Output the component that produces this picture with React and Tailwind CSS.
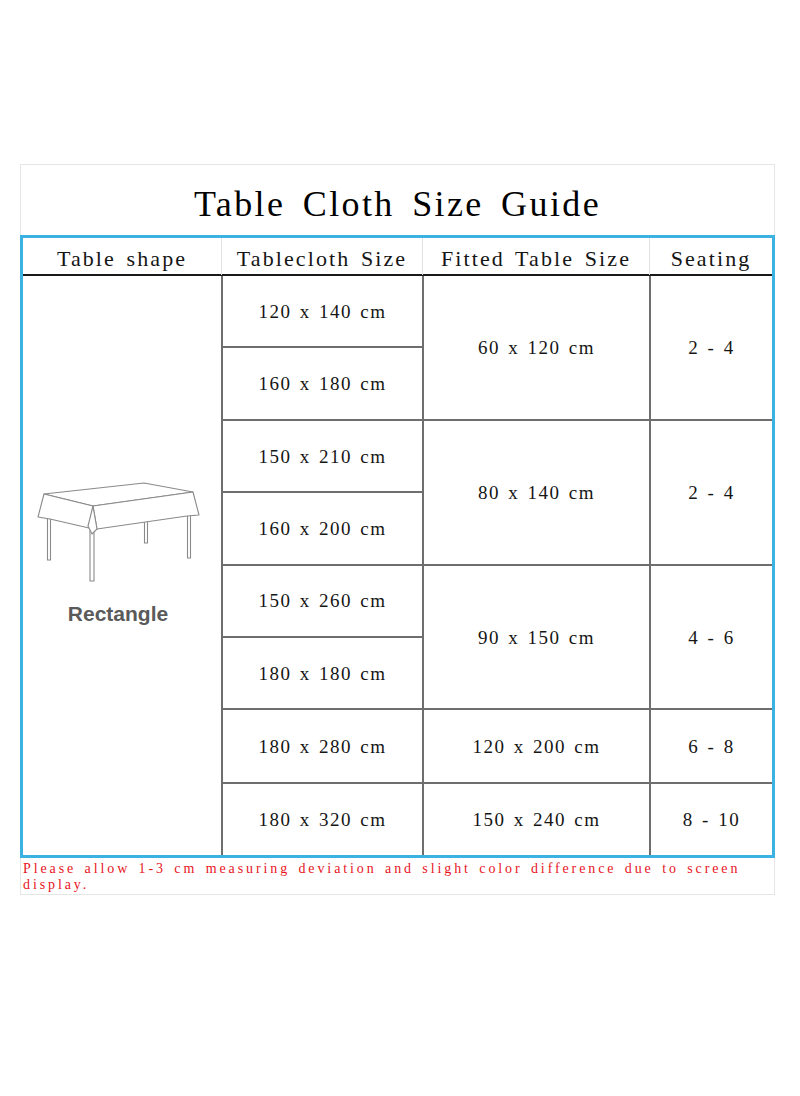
import React from "react";

const serif = { fontFamily: '"Liberation Serif", "Times New Roman", serif' };

const groups = [
  { sizes: ["120 x 140 cm", "160 x 180 cm"], fitted: "60 x 120 cm", seats: "2 - 4" },
  { sizes: ["150 x 210 cm", "160 x 200 cm"], fitted: "80 x 140 cm", seats: "2 - 4" },
  { sizes: ["150 x 260 cm", "180 x 180 cm"], fitted: "90 x 150 cm", seats: "4 - 6" },
  { sizes: ["180 x 280 cm"], fitted: "120 x 200 cm", seats: "6 - 8" },
  { sizes: ["180 x 320 cm"], fitted: "150 x 240 cm", seats: "8 - 10" },
];

function TableDrawing() {
  return (
    <svg width="175" height="112" viewBox="30 475 175 112" fill="none" stroke="#8a8a8a" strokeWidth="1.1" strokeLinejoin="round">
      {/* legs */}
      <path d="M46.5 517 L46.5 559 L49.5 559 L49.5 517" fill="#fff" />
      <path d="M143.5 519 L143.5 542 L146.5 542 L146.5 519" fill="#fff" />
      <path d="M186.5 514 L186.5 557 L189.5 557 L189.5 514" fill="#fff" />
      <path d="M89 529 L89 580 L93 580 L93 529" fill="#fff" />
      {/* cloth top */}
      <path d="M43 493 L143 482 L192 491 L92 505 Z" fill="#fff" />
      {/* left drop */}
      <path d="M43 493 L37 516 L49 518 L88 527 L92 505 Z" fill="#fff" />
      {/* right drop */}
      <path d="M92 505 L192 491 L198 514 L186 515 L96 528 Z" fill="#fff" />
      {/* front corner fold */}
      <path d="M92 505 L87 525 L91 533 L96 528 Z" fill="#fff" />
    </svg>
  );
}

export default function App() {
  return (
    <div className="w-[800px] h-[1096px] bg-white pt-[164px]">
      <div className="ml-[20px] w-[755px]">
        {/* title */}
        <div className="h-[71px] border-t border-x border-[#e6e6e6] flex items-center justify-center pt-[8px]">
          <h1 className="text-[36px] tracking-[2.4px] [word-spacing:6px] text-black leading-none" style={serif}>
            Table Cloth Size Guide
          </h1>
        </div>

        {/* table */}
        <div className="border-[3px] border-[#3cb2e2]">
          <div className="grid grid-cols-[198px_201px_227px_123px] h-[38px] border-b-2 border-[#1a1a1a] text-[22px] tracking-[2.1px] [word-spacing:3px] text-[#151515]" style={serif}>
            <div className="flex items-center justify-center pt-[4px]">Table shape</div>
            <div className="flex items-center justify-center pt-[4px] border-l border-[#e2e2e2]">Tablecloth Size</div>
            <div className="flex items-center justify-center pt-[4px] border-l border-[#e2e2e2]">Fitted Table Size</div>
            <div className="flex items-center justify-center pt-[4px] border-l border-[#e2e2e2]">Seating</div>
          </div>

          <div className="flex h-[579px] text-[19px] tracking-[1.5px] [word-spacing:2px] text-[#151515]" style={serif}>
            <div className="w-[198px] flex flex-col items-center justify-center gap-[14px] pb-[29px] pr-[8px]">
              <TableDrawing />
              <span className="text-[21px] font-bold text-[#5a5a5a] tracking-normal [word-spacing:0] leading-6" style={{ fontFamily: '"Liberation Sans", Arial, sans-serif' }}>
                Rectangle
              </span>
            </div>
            <div className="flex-1 flex flex-col border-l-2 border-[#6e6e6e]">
              {groups.map((g, gi) => (
                <div
                  key={gi}
                  className={`flex ${gi > 0 ? "border-t-2 border-[#6e6e6e]" : ""}`}
                  style={{ flex: g.sizes.length }}
                >
                  <div className="w-[199px] flex flex-col">
                    {g.sizes.map((s, si) => (
                      <div
                        key={s}
                        className={`flex-1 flex items-center justify-center pt-[2px] ${si > 0 ? "border-t-2 border-[#6e6e6e]" : ""}`}
                      >
                        {s}
                      </div>
                    ))}
                  </div>
                  <div className="w-[227px] flex items-center justify-center pt-[2px] border-l-2 border-[#6e6e6e]">
                    {g.fitted}
                  </div>
                  <div className="flex-1 flex items-center justify-center pt-[2px] border-l-2 border-[#6e6e6e]">
                    {g.seats}
                  </div>
                </div>
              ))}
            </div>
          </div>
        </div>

        {/* note */}
        <div className="border-x border-b border-[#e6e6e6] pl-[2px] pt-[3px] pb-[1px] text-[14px] leading-[16px] tracking-[2.9px] [word-spacing:2px] text-[#e8141c]" style={serif}>
          <div className="whitespace-nowrap">Please allow 1-3 cm measuring deviation and slight color difference due to screen</div>
          <div>display.</div>
        </div>
      </div>
    </div>
  );
}
